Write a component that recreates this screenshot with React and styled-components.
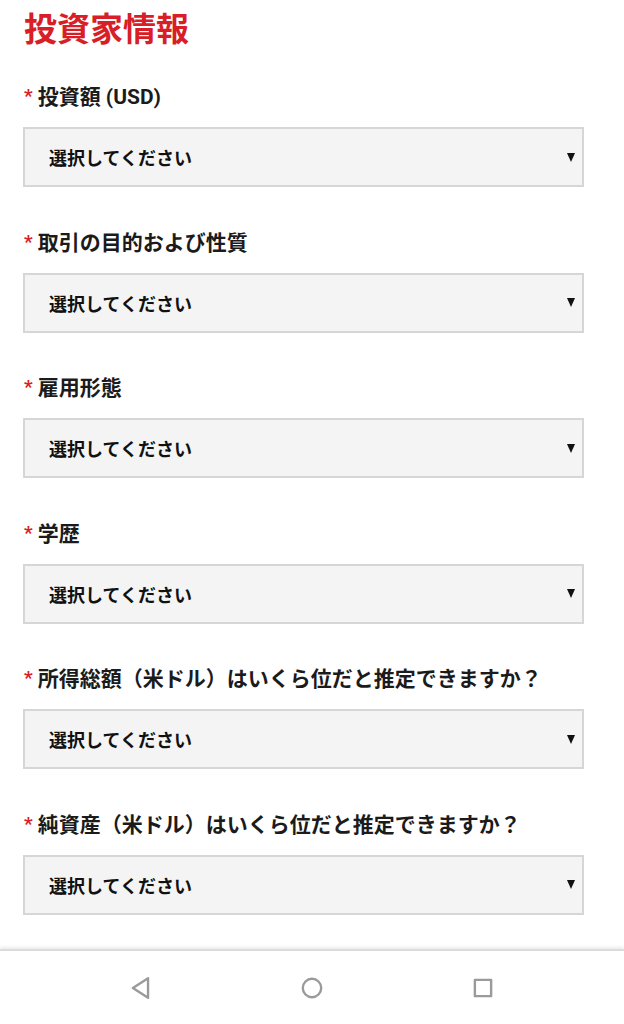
import React from 'react';
import styled, {createGlobalStyle} from 'styled-components';

const GlobalStyle = createGlobalStyle`
  html, body {
    margin: 0;
    padding: 0;
    background: #ffffff;
  }
  body {
    font-family: Roboto, "Noto Sans CJK JP", sans-serif;
    color: #1b1b1b;
  }
`;

const Screen = styled.div`
  display: flex;
  flex-direction: column;
  height: 100vh;
`;

const Content = styled.main`
  flex: 1;
  padding: 10px 40px 0 23px;
`;

const Title = styled.h1`
  margin: 0 0 32px 1px;
  font-size: 33px;
  line-height: 40px;
  font-weight: 700;
  color: #d81e27;
`;

const Field = styled.div`
  margin-bottom: 40.5px;
  &:last-child {
    margin-bottom: 0;
  }
`;

const Label = styled.label`
  display: flex;
  align-items: center;
  gap: 5px;
  margin: 0 0 15px 1px;
  font-size: 21px;
  line-height: 30px;
  font-weight: 700;
  color: #1b1b1b;
`;

const Required = styled.span`
  color: #d81e27;
  font-size: 19px;
  position: relative;
  top: -1px;
`;

const SelectBox = styled.div`
  display: flex;
  align-items: center;
  justify-content: space-between;
  box-sizing: border-box;
  height: 60px;
  padding: 0 7px 0 24px;
  border: 2px solid #d6d6d6;
  background: #f4f4f4;
  font-size: 18px;
  font-weight: 700;
  color: #111111;
`;

const Arrow = styled.span`
  width: 0;
  height: 0;
  border-left: 4.5px solid transparent;
  border-right: 4.5px solid transparent;
  border-top: 9px solid #111111;
`;

const NavBar = styled.nav`
  display: flex;
  align-items: center;
  justify-content: center;
  gap: 135px;
  flex: 0 0 73px;
  background: #ffffff;
  border-top: 2px solid #dcdcdc;
  box-shadow: 0 -2px 3px rgba(0, 0, 0, 0.08);
`;

const NavButton = styled.span`
  display: flex;
  align-items: center;
  justify-content: center;
  width: 36px;
  height: 36px;
`;

const fields = [
  '投資額 (USD)',
  '取引の目的および性質',
  '雇用形態',
  '学歴',
  '所得総額（米ドル）はいくら位だと推定できますか？',
  '純資産（米ドル）はいくら位だと推定できますか？',
];

const Icon = ({children}) => (
  <svg width="26" height="26" viewBox="0 0 24 24" fill="none" stroke="#9a9a9a"
       strokeWidth="2.2" strokeLinejoin="round">
    {children}
  </svg>
);

export default function App() {
  return (
    <Screen>
      <GlobalStyle/>
      <Content>
        <Title>投資家情報</Title>
        {fields.map((label) => (
          <Field key={label}>
            <Label>
              <Required>*</Required>
              {label}
            </Label>
            <SelectBox>
              <span>選択してください</span>
              <Arrow/>
            </SelectBox>
          </Field>
        ))}
      </Content>
      <NavBar>
        <NavButton>
          <Icon><path d="M18.5 3 L4.5 12 L18.5 21 Z"/></Icon>
        </NavButton>
        <NavButton>
          <Icon><circle cx="12" cy="12" r="8.5"/></Icon>
        </NavButton>
        <NavButton>
          <Icon><rect x="4.5" y="4.5" width="15" height="15"/></Icon>
        </NavButton>
      </NavBar>
    </Screen>
  );
}
